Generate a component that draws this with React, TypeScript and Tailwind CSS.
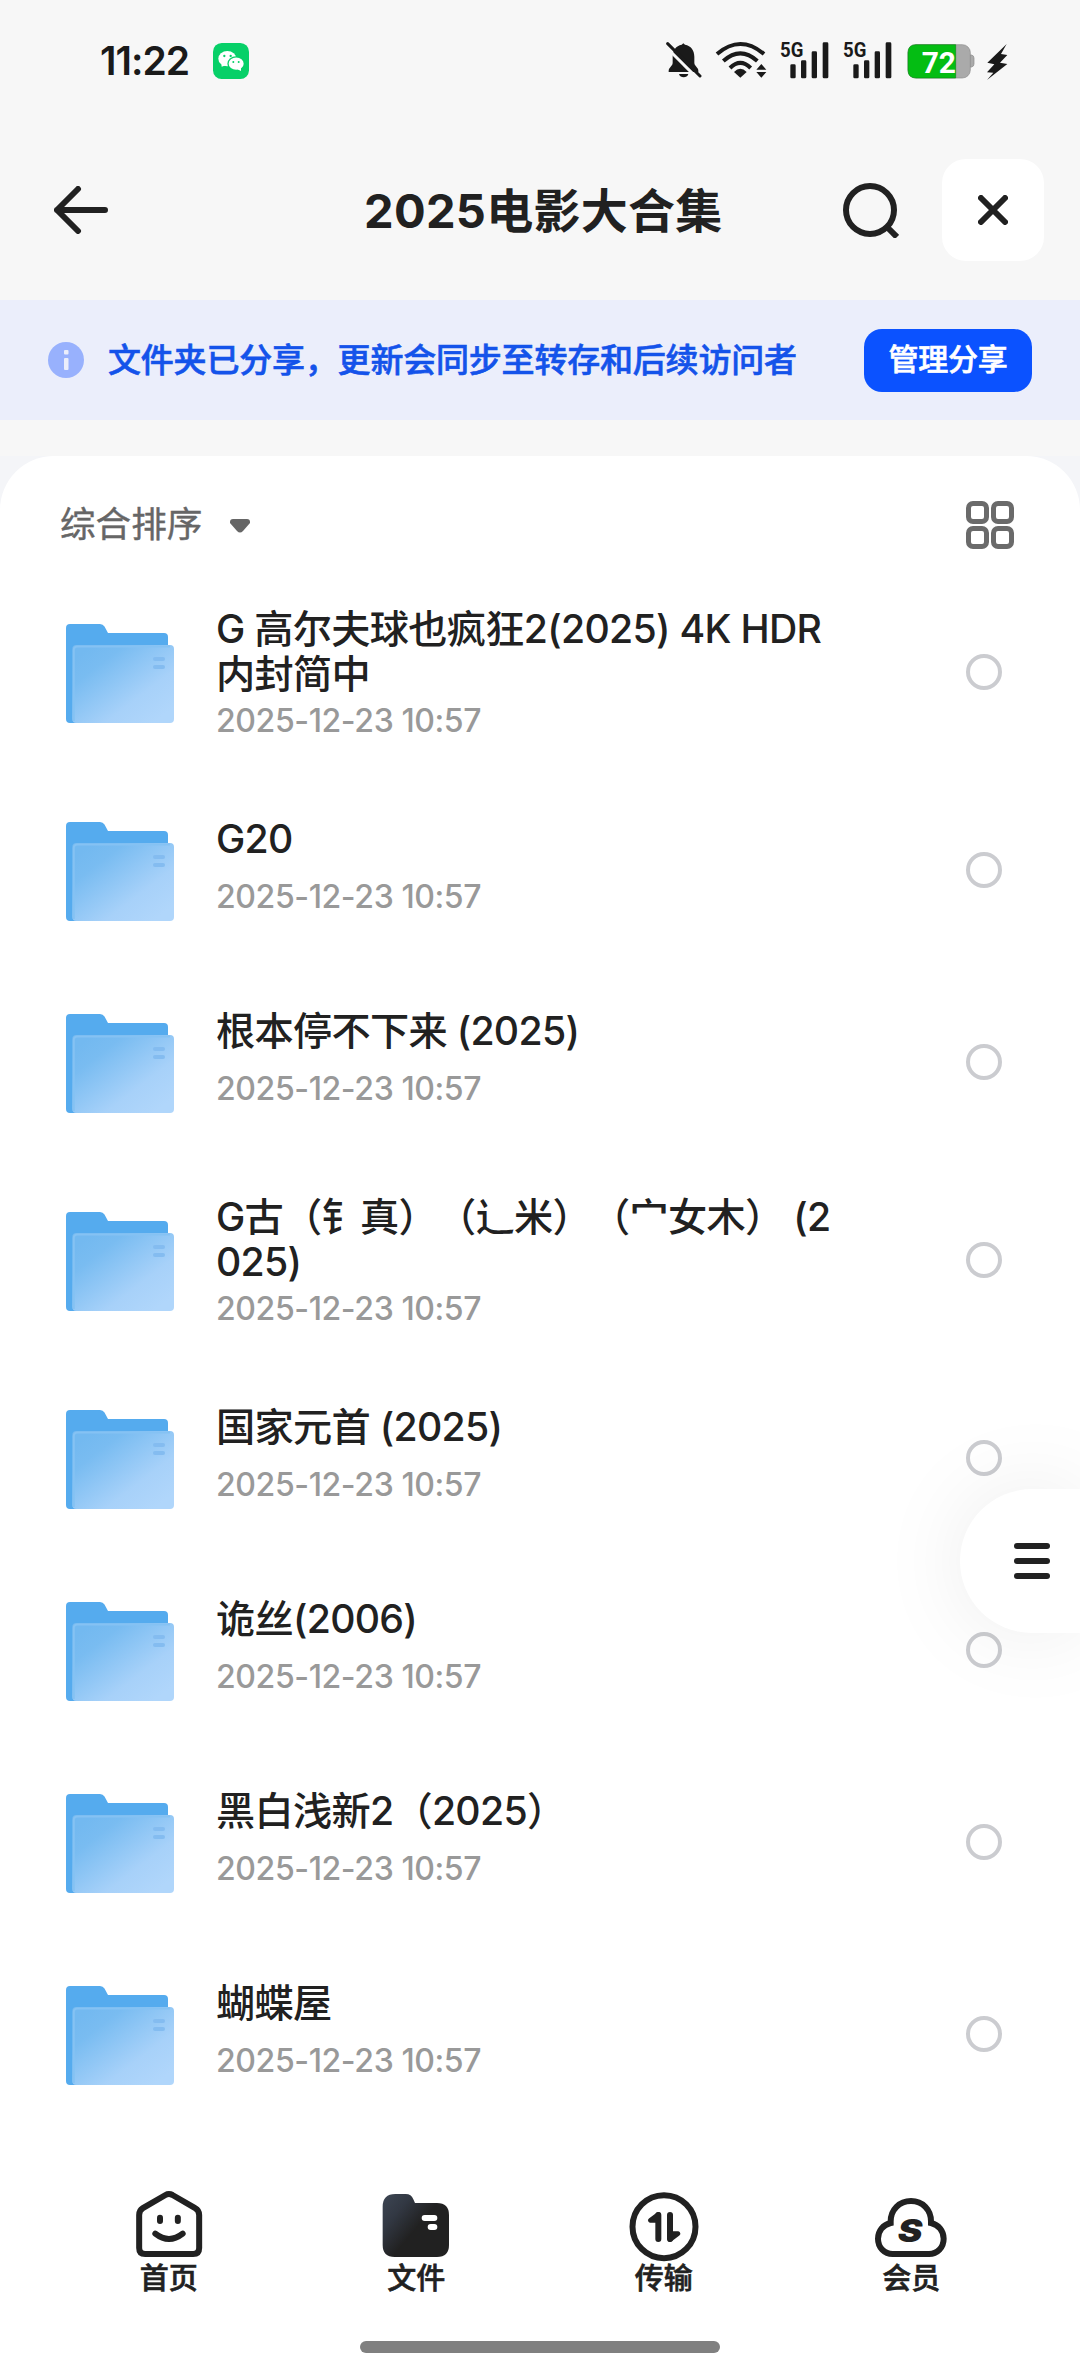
import type { ReactNode } from "react";
import clsx from "clsx";

interface FolderItem {
  id: number;
  lines: string[];
  time: string;
}

interface NavItem {
  label: string;
  icon: ReactNode;
}

const TIME = "2025-12-23 10:57";

const folders: FolderItem[] = [
  { id: 1, lines: ["G 高尔夫球也疯狂2(2025) 4K HDR", "内封简中"], time: TIME },
  { id: 2, lines: ["G20"], time: TIME },
  { id: 3, lines: ["根本停不下来 (2025)"], time: TIME },
  { id: 4, lines: ["G古（钅真）（辶米）（宀女木） (2", "025)"], time: TIME },
  { id: 5, lines: ["国家元首 (2025)"], time: TIME },
  { id: 6, lines: ["诡丝(2006)"], time: TIME },
  { id: 7, lines: ["黑白浅新2（2025）"], time: TIME },
  { id: 8, lines: ["蝴蝶屋"], time: TIME },
];

function WechatIcon() {
  return (
    <svg className="size-9" viewBox="459 69 108 108">
      <rect x="459" y="69" width="108" height="108" rx="26" fill="#07d068" />
      <path d="M484 130l1 10 12-4z" fill="#fff" />
      <ellipse cx="502" cy="116" rx="27" ry="23" fill="#fff" />
      <ellipse cx="528" cy="131" rx="26" ry="22" fill="#07d068" />
      <ellipse cx="528.500" cy="131" rx="22.500" ry="18.500" fill="#fff" />
      <path d="M532 148l11 5 0-10z" fill="#fff" />
      <g fill="#07d068">
        <circle cx="493" cy="108" r="3.500" />
        <circle cx="512" cy="108" r="3.500" />
        <circle cx="520" cy="126" r="3" />
        <circle cx="536" cy="126" r="3" />
      </g>
    </svg>
  );
}

function MutedBellIcon() {
  return (
    <svg className="h-[38px] w-9" viewBox="76 62 108 114">
      <path
        d="M128 69l5 4c18 3 28 17 28 36v18c0 10 12 14 12 24v4H84v-4c0-10 12-14 12-24v-18c0-19 10-33 27-36z"
        fill="#1a1a1a"
      />
      <path d="M115 161h28c-3 13-25 13-28 0z" fill="#1a1a1a" />
      <path d="M70 74l98 98" stroke="#f7f7f7" strokeWidth="9" />
      <path d="M81 70l97 97" stroke="#1a1a1a" strokeWidth="9" strokeLinecap="round" />
    </svg>
  );
}

function WifiIcon() {
  return (
    <svg className="h-[38px] w-[52px]" viewBox="224 62 156 114">
      <g fill="none" stroke="#1a1a1a" strokeWidth="12">
        <path d="M230 101q70-60 141 0" />
        <path d="M249 122q51-46 102 0" />
        <path d="M269 143q31-31 62 0" />
      </g>
      <path d="M281 155q19-19 38 0l-19 17z" fill="#1a1a1a" />
      <path d="M348 148l15-17 15 17zM348 155l15 17 15-17z" fill="#1a1a1a" />
    </svg>
  );
}

function SignalIcon() {
  return (
    <svg className="h-[38px] w-[49px] overflow-visible" viewBox="419 62 147 114">
      <text
        x="419"
        y="110"
        fontSize="62"
        textLength="70"
        lengthAdjust="spacingAndGlyphs"
        fill="#1a1a1a"
        className="font-['Roboto',sans-serif] font-bold"
      >
        5G
      </text>
      <g fill="#1a1a1a">
        <rect x="450" y="132" width="16" height="42" rx="4" />
        <rect x="482" y="120" width="16" height="54" rx="4" />
        <rect x="514" y="93" width="16" height="81" rx="4" />
        <rect x="547" y="66" width="17" height="108" rx="4" />
      </g>
    </svg>
  );
}

function BatteryIcon() {
  return (
    <svg className="h-[38px] w-[68px] overflow-visible" viewBox="802 65 204 114">
      <path d="M990 104h6q7 2 7 9v18q0 7-7 9h-6z" fill="#aaa" stroke="#888" strokeWidth="2" />
      <rect x="805" y="73" width="187" height="100" rx="24" fill="#aaa" stroke="#8d8d8d" strokeWidth="2" />
      <path d="M948 73H829q-24 0-24 24v52q0 24 24 24h119z" fill="#04bd13" stroke="#108a18" strokeWidth="2" />
      <text
        x="846"
        y="158"
        fontSize="91"
        textLength="103"
        lengthAdjust="spacingAndGlyphs"
        fill="#fff"
        className="font-['Roboto',sans-serif] font-bold"
      >
        72
      </text>
    </svg>
  );
}

function StatusBar() {
  return (
    <div className="flex h-[120px] items-center pl-[100px] pr-[72px]">
      <span className="w-[89px] text-[39px] font-semibold leading-none tracking-[-1px] text-[#1a1a1a]">
        11:22
      </span>
      <div className="ml-6 mt-[2px]">
        <WechatIcon />
      </div>
      <div className="ml-auto flex items-center">
        <MutedBellIcon />
        <div className="ml-[13px]">
          <WifiIcon />
        </div>
        <div className="ml-[13px]">
          <SignalIcon />
        </div>
        <div className="ml-[14px]">
          <SignalIcon />
        </div>
        <div className="ml-[15px] mt-[2px]">
          <BatteryIcon />
        </div>
        <svg className="ml-[11px] mt-[3px] h-[38px] w-[22px]" viewBox="1036 66 66 114">
          <path d="M1098 69l-58 56 21 5-22 24 19 1-19 22 61-48-22-4 22-23-19-3z" fill="#1a1a1a" />
        </svg>
      </div>
    </div>
  );
}

function Header() {
  return (
    <header className="flex h-[180px] items-center pl-[54px] pr-9">
      <svg
        className="h-12 w-[54px]"
        viewBox="0 0 54 48"
        fill="none"
        stroke="#212121"
        strokeWidth="6"
        strokeLinecap="round"
        strokeLinejoin="round"
      >
        <path d="M24 3L3 24l21 21M3 24h48" />
      </svg>
      <h1 className="ml-[256px] whitespace-nowrap text-[47px] font-bold leading-none tracking-[0.3px] text-[#212121]">
        2025电影大合集
      </h1>
      <svg
        className="ml-auto h-14 w-14"
        viewBox="0 0 56 56"
        fill="none"
        stroke="#212121"
        strokeWidth="6"
      >
        <circle cx="27" cy="28" r="24" />
        <path d="M44 45l10 10" />
      </svg>
      <button className="ml-[43px] flex size-[102px] items-center justify-center rounded-3xl bg-white">
        <svg className="size-[30px]" viewBox="0 0 30 30" stroke="#212121" strokeWidth="6" strokeLinecap="round">
          <path d="M3 3l24 24M27 3L3 27" />
        </svg>
      </button>
    </header>
  );
}

function ShareBanner() {
  return (
    <div className="flex h-[120px] items-center bg-[#ebeefb] px-12">
      <svg className="size-9" viewBox="0 0 36 36">
        <circle cx="18" cy="18" r="18" fill="#98b1fd" />
        <rect x="16" y="8" width="4.500" height="4.500" rx="1" fill="#ebeefb" />
        <rect x="16" y="16" width="4.500" height="12" rx="1" fill="#ebeefb" />
      </svg>
      <p className="ml-6 whitespace-nowrap text-[33px] font-medium leading-none tracking-[-0.2px] text-[#1453ea] [-webkit-text-stroke:0.6px_#1453ea]">
        文件夹已分享，更新会同步至转存和后续访问者
      </p>
      <button className="ml-auto h-[63px] w-[168px] rounded-[18px] bg-[#0b52ff] pb-[3px] text-[30px] font-medium leading-none tracking-[-0.3px] text-white [-webkit-text-stroke:0.6px_white]">
        管理分享
      </button>
    </div>
  );
}

function SortBar() {
  return (
    <div className="flex h-[114px] items-center pl-[60px] pr-[66px] pt-6">
      <span className="w-[144px] text-[35.6px] leading-none text-[#666] [-webkit-text-stroke:0.4px_#666]">
        综合排序
      </span>
      <svg className="ml-[26px] mt-[2px] h-[14px] w-5" viewBox="0 0 20 14">
        <path d="M3 0h14q3 0 3 3v1l-7 8q-3 3-6 0l-7-8v-1q0-3 3-3z" fill="#666" />
      </svg>
      <div className="ml-auto grid grid-cols-2 gap-[2px]">
        <div className="size-[23px] rounded-[7px] border-[5px] border-[#6a6a6a]" />
        <div className="size-[23px] rounded-[7px] border-[5px] border-[#6a6a6a]" />
        <div className="size-[23px] rounded-[7px] border-[5px] border-[#6a6a6a]" />
        <div className="size-[23px] rounded-[7px] border-[5px] border-[#6a6a6a]" />
      </div>
    </div>
  );
}

function FolderIcon() {
  return (
    <svg className="mt-[3px] h-[99px] w-[108px]" viewBox="0 0 108 99">
      <defs>
        <linearGradient id="folder-front" x1="0.1" y1="0.1" x2="0.9" y2="0.9">
          <stop offset="0" stopColor="#73b9f0" />
          <stop offset="0.2" stopColor="#79bcf1" />
          <stop offset="0.7" stopColor="#a7d1f9" />
          <stop offset="1" stopColor="#b0d6fb" />
        </linearGradient>
      </defs>
      <path d="M4 0h30q3 0 4.500 2.500L42 9h56q4 0 4 4v40H30v46H4q-4 0-4-4V4q0-4 4-4z" fill="#55abee" />
      <rect x="6.300" y="21" width="101.700" height="78" rx="4" fill="url(#folder-front)" />
      <path d="M7.800 97V26q0-3.500 3.500-3.500H104" fill="none" stroke="#85c2f3" strokeWidth="2" />
      <rect x="87" y="33" width="12" height="4" rx="2" fill="#84bcf0" />
      <rect x="87" y="41" width="12" height="4" rx="2" fill="#84bcf0" />
    </svg>
  );
}

function FolderRow({ item }: { item: FolderItem }) {
  const tall = item.lines.length > 1;

  return (
    <li className={clsx("flex items-center pl-[66px] pr-[78px]", tall ? "h-[204px]" : "h-[192px]")}>
      <FolderIcon />
      <div className={clsx("ml-[42px] flex-1 self-start", tall ? "pt-9" : "pt-[42px]")}>
        <div className="whitespace-nowrap text-[39.2px] font-[450] leading-[45px] tracking-[-0.7px] text-[#212121] [text-spacing-trim:space-all]">
          {item.lines.map((line) => (
            <div key={line}>{line}</div>
          ))}
        </div>
        <div
          className={clsx(
            "text-[32px] font-[450] leading-[48px] tracking-[-0.4px] text-[#999]",
            tall ? "mt-px" : "mt-3"
          )}
        >
          {item.time}
        </div>
      </div>
      <div className="size-9 rounded-full border-4 border-[#cbccd0]" />
    </li>
  );
}

const navItems: NavItem[] = [
  {
    label: "首页",
    icon: (
      <svg className="size-20" viewBox="86.500 36 240 240">
        <path
          d="M117 135q0-14 11-20.500L196 75q10-6 21 0l68 39.500q12 6.500 12 20.500v99q0 18-18 18H135q-18 0-18-18z"
          fill="none"
          stroke="#212121"
          strokeWidth="18"
        />
        <rect x="170.500" y="134" width="18" height="28" rx="9" fill="#212121" />
        <rect x="224" y="134" width="18" height="28" rx="9" fill="#212121" />
        <path d="M165.500 191q41 32 82 0" fill="none" stroke="#212121" strokeWidth="18" strokeLinecap="round" />
      </svg>
    ),
  },
  {
    label: "文件",
    icon: (
      <svg className="size-20" viewBox="829 36 240 240">
        <defs>
          <linearGradient id="nav-folder" x1="0" y1="0.15" x2="0.5" y2="0.55">
            <stop offset="0" stopColor="#3a424f" />
            <stop offset="0.4" stopColor="#323843" />
            <stop offset="1" stopColor="#212121" />
          </linearGradient>
        </defs>
        <path
          d="M849 110q0-38 38-38h31q17 0 23 16l5 11h66q36 0 36 36v90q0 36-36 36H885q-36 0-36-36z"
          fill="url(#nav-folder)"
        />
        <rect x="966" y="135" width="47" height="18" rx="9" fill="#fff" />
        <rect x="984" y="162" width="29" height="18" rx="9" fill="#fff" />
      </svg>
    ),
  },
  {
    label: "传输",
    icon: (
      <svg className="size-20" viewBox="131 36 240 240">
        <circle cx="251" cy="170" r="94.500" fill="none" stroke="#212121" strokeWidth="18" />
        <g fill="#212121" stroke="#212121" strokeLinecap="round" strokeLinejoin="round">
          <path d="M234 135v72" strokeWidth="18" />
          <path d="M234 133l-24 18h24z" strokeWidth="14" />
          <g transform="rotate(180 251.500 171)">
            <path d="M234 135v72" strokeWidth="18" />
            <path d="M234 133l-24 18h24z" strokeWidth="14" />
          </g>
        </g>
      </svg>
    ),
  },
  {
    label: "会员",
    icon: (
      <svg className="size-20" viewBox="874 36 240 240">
        <path
          d="M939 252c-25 0-44-20-44-46 0-23 15-42 38-47v-5c0-35 26-61 61-61s60 26 60 61v5c23 5 38 24 38 47 0 26-19 46-44 46z"
          fill="none"
          stroke="#212121"
          strokeWidth="18"
        />
        <text
          x="954"
          y="215"
          fontSize="96"
          textLength="74"
          lengthAdjust="spacingAndGlyphs"
          fill="#212121"
          className="font-['Inter',sans-serif] font-black italic"
        >
          S
        </text>
      </svg>
    ),
  },
];

function BottomNav() {
  return (
    <nav className="grid grid-cols-4 px-[45px] pt-[52px]">
      {navItems.map((item) => (
        <div key={item.label} className="flex flex-col items-center">
          {item.icon}
          <span className="-mt-px mb-px text-[29px] font-medium leading-9 text-[#212121] [-webkit-text-stroke:0.6px_#212121]">
            {item.label}
          </span>
        </div>
      ))}
    </nav>
  );
}

export default function App() {
  return (
    <div className="relative flex h-[2374px] w-[1080px] flex-col overflow-hidden bg-[#f7f7f7] font-['Inter','Noto_Sans_CJK_SC',sans-serif]">
      <StatusBar />
      <Header />
      <ShareBanner />
      <div className="mt-9 flex-1 bg-[#f4f5f8]">
        <main className="flex h-full flex-col rounded-t-[54px] bg-white">
          <SortBar />
          <ul>
            {folders.map((item) => (
              <FolderRow key={item.id} item={item} />
            ))}
          </ul>
          <BottomNav />
          <div className="mx-auto mt-[43px] h-3 w-[360px] rounded-full bg-[#808080]" />
        </main>
      </div>

      {/* floating menu handle docked to the right edge */}
      <button className="absolute right-0 top-[1489px] flex h-36 w-[120px] flex-col items-start justify-center gap-[9px] rounded-l-full bg-white pl-[54px] shadow-[0_0_90px_rgba(0,0,0,0.08)]">
        <span className="h-[6px] w-9 rounded-full bg-[#212121]" />
        <span className="h-[6px] w-9 rounded-full bg-[#212121]" />
        <span className="h-[6px] w-9 rounded-full bg-[#212121]" />
      </button>
    </div>
  );
}
